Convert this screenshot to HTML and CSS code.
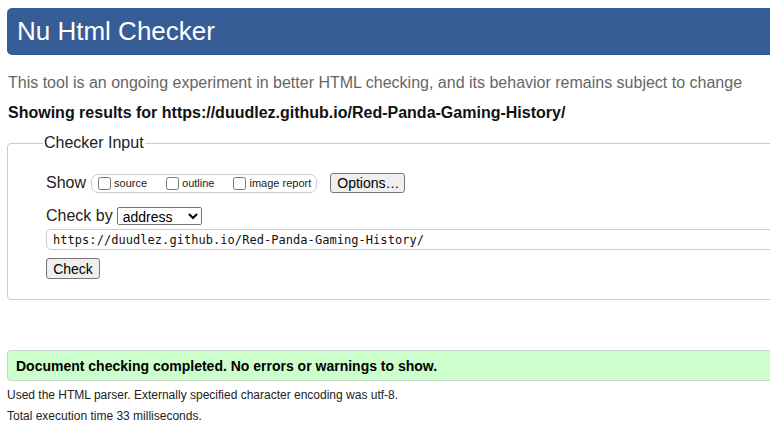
FILE: index.html
```html
<!DOCTYPE html>
<html lang="en">
<head>
<meta charset="utf-8">
<title>Nu Html Checker</title>
<link rel="stylesheet" href="styles.css">
</head>
<body>
<div class="page">
  <h1 class="title">Nu Html Checker</h1>
  <p class="about">This tool is an ongoing experiment in better HTML checking, and its behavior remains subject to change</p>
  <p class="results">Showing results for https://duudlez.github.io/Red-Panda-Gaming-History/</p>
  <fieldset class="input-box">
    <legend class="legend">Checker Input</legend>
    <div class="row show-row">
      <span class="lbl">Show</span>
      <span class="opts">
        <label class="opt"><input type="checkbox" class="cb">source</label>
        <label class="opt"><input type="checkbox" class="cb">outline</label>
        <label class="opt"><input type="checkbox" class="cb">image report</label>
      </span>
      <button class="btn opt-btn" type="button">Options…</button>
    </div>
    <div class="row by-row">
      <span class="lbl">Check by</span>
      <select class="sel"><option>address</option></select>
    </div>
    <input class="url" type="text" value="https://duudlez.github.io/Red-Panda-Gaming-History/">
    <div class="submit-row"><button class="btn check-btn" type="button">Check</button></div>
  </fieldset>
  <p class="success">Document checking completed. No errors or warnings to show.</p>
  <p class="info">Used the HTML parser. Externally specified character encoding was utf-8.</p>
  <p class="info">Total execution time 33 milliseconds.</p>
</div>
</body>
</html>
```
FILE: styles.css
```css
html, body {
  margin: 0;
  padding: 0;
  overflow: hidden;
  background: #fff;
}
body {
  font-family: "Liberation Sans", Arial, sans-serif;
  color: #000;
}
.page {
  width: 820px;
  padding: 8px 0 0 7px;
}
.title {
  margin: 0;
  height: 47px;
  display: flex;
  align-items: center;
  padding-left: 10px;
  background: #365d95;
  color: #fff;
  font-weight: normal;
  font-size: 26px;
  border-radius: 5px;
}
.about {
  margin: 18px 0 0 1px;
  font-size: 16px;
  line-height: 19px;
  color: #666;
}
.results {
  margin: 11px 0 0 1px;
  font-size: 16px;
  line-height: 19px;
  font-weight: bold;
  color: #111;
}
.input-box {
  margin: 12px 0 0 0;
  padding: 0 0 20px 38px;
  border: 1px solid #ccc;
  border-radius: 4px;
  min-width: 0;
}
.legend {
  font-size: 16px;
  line-height: 18px;
  padding: 0 1px;
  margin-left: -3px;
  color: #222;
}
.row {
  display: flex;
  align-items: center;
}
.show-row {
  margin-top: 21px;
  height: 20px;
}
.lbl {
  font-size: 16px;
  color: #222;
}
.opts {
  display: flex;
  align-items: center;
  margin-left: 5px;
  height: 17px;
  padding: 0 5px 0 6px;
  border: 1px solid #ccc;
  border-radius: 7px;
  gap: 19px;
}
.opt {
  display: flex;
  align-items: center;
  font-size: 11px;
  color: #222;
}
.cb {
  margin: 0 3px 0 0;
  width: 13px;
  height: 13px;
}
.btn {
  font-family: "Liberation Sans", Arial, sans-serif;
  font-size: 14px;
  color: #000;
  background: #efefef;
  border: 1px solid #767676;
  border-radius: 3px;
  padding: 0 6px;
  height: 20px;
  line-height: 18px;
}
.opt-btn {
  margin-left: 13px;
  width: 75px;
}
.by-row {
  margin-top: 13px;
  height: 20px;
}
.sel {
  margin-left: 4px;
  width: 85px;
  height: 18px;
  font-family: "Liberation Sans", Arial, sans-serif;
  font-size: 14px;
  padding: 0 0 0 1px;
  border: 1px solid #767676;
  border-radius: 2px;
  background: #fff;
  color: #000;
}
.url {
  display: block;
  box-sizing: border-box;
  margin-top: 3px;
  width: 760px;
  height: 21px;
  padding: 0 6px;
  font-family: "DejaVu Sans Mono", "Liberation Mono", monospace;
  font-size: 12px;
  letter-spacing: 0.05px;
  color: #111;
  border: 1px solid #ccc;
  border-radius: 5px;
  outline: none;
}
.submit-row {
  margin-top: 8px;
  display: flex;
}
.check-btn {
  width: 54px;
  height: 21px;
}
.success {
  margin: 50px 0 0 0;
  height: 29px;
  display: flex;
  align-items: center;
  padding-left: 8px;
  background: #ccffcc;
  border: 1px solid #c4d8c4;
  border-radius: 4px;
  font-weight: bold;
  font-size: 14px;
  color: #000;
}
.info {
  margin: 7px 0 0 0;
  font-size: 12px;
  line-height: 14px;
  color: #222;
}
```
